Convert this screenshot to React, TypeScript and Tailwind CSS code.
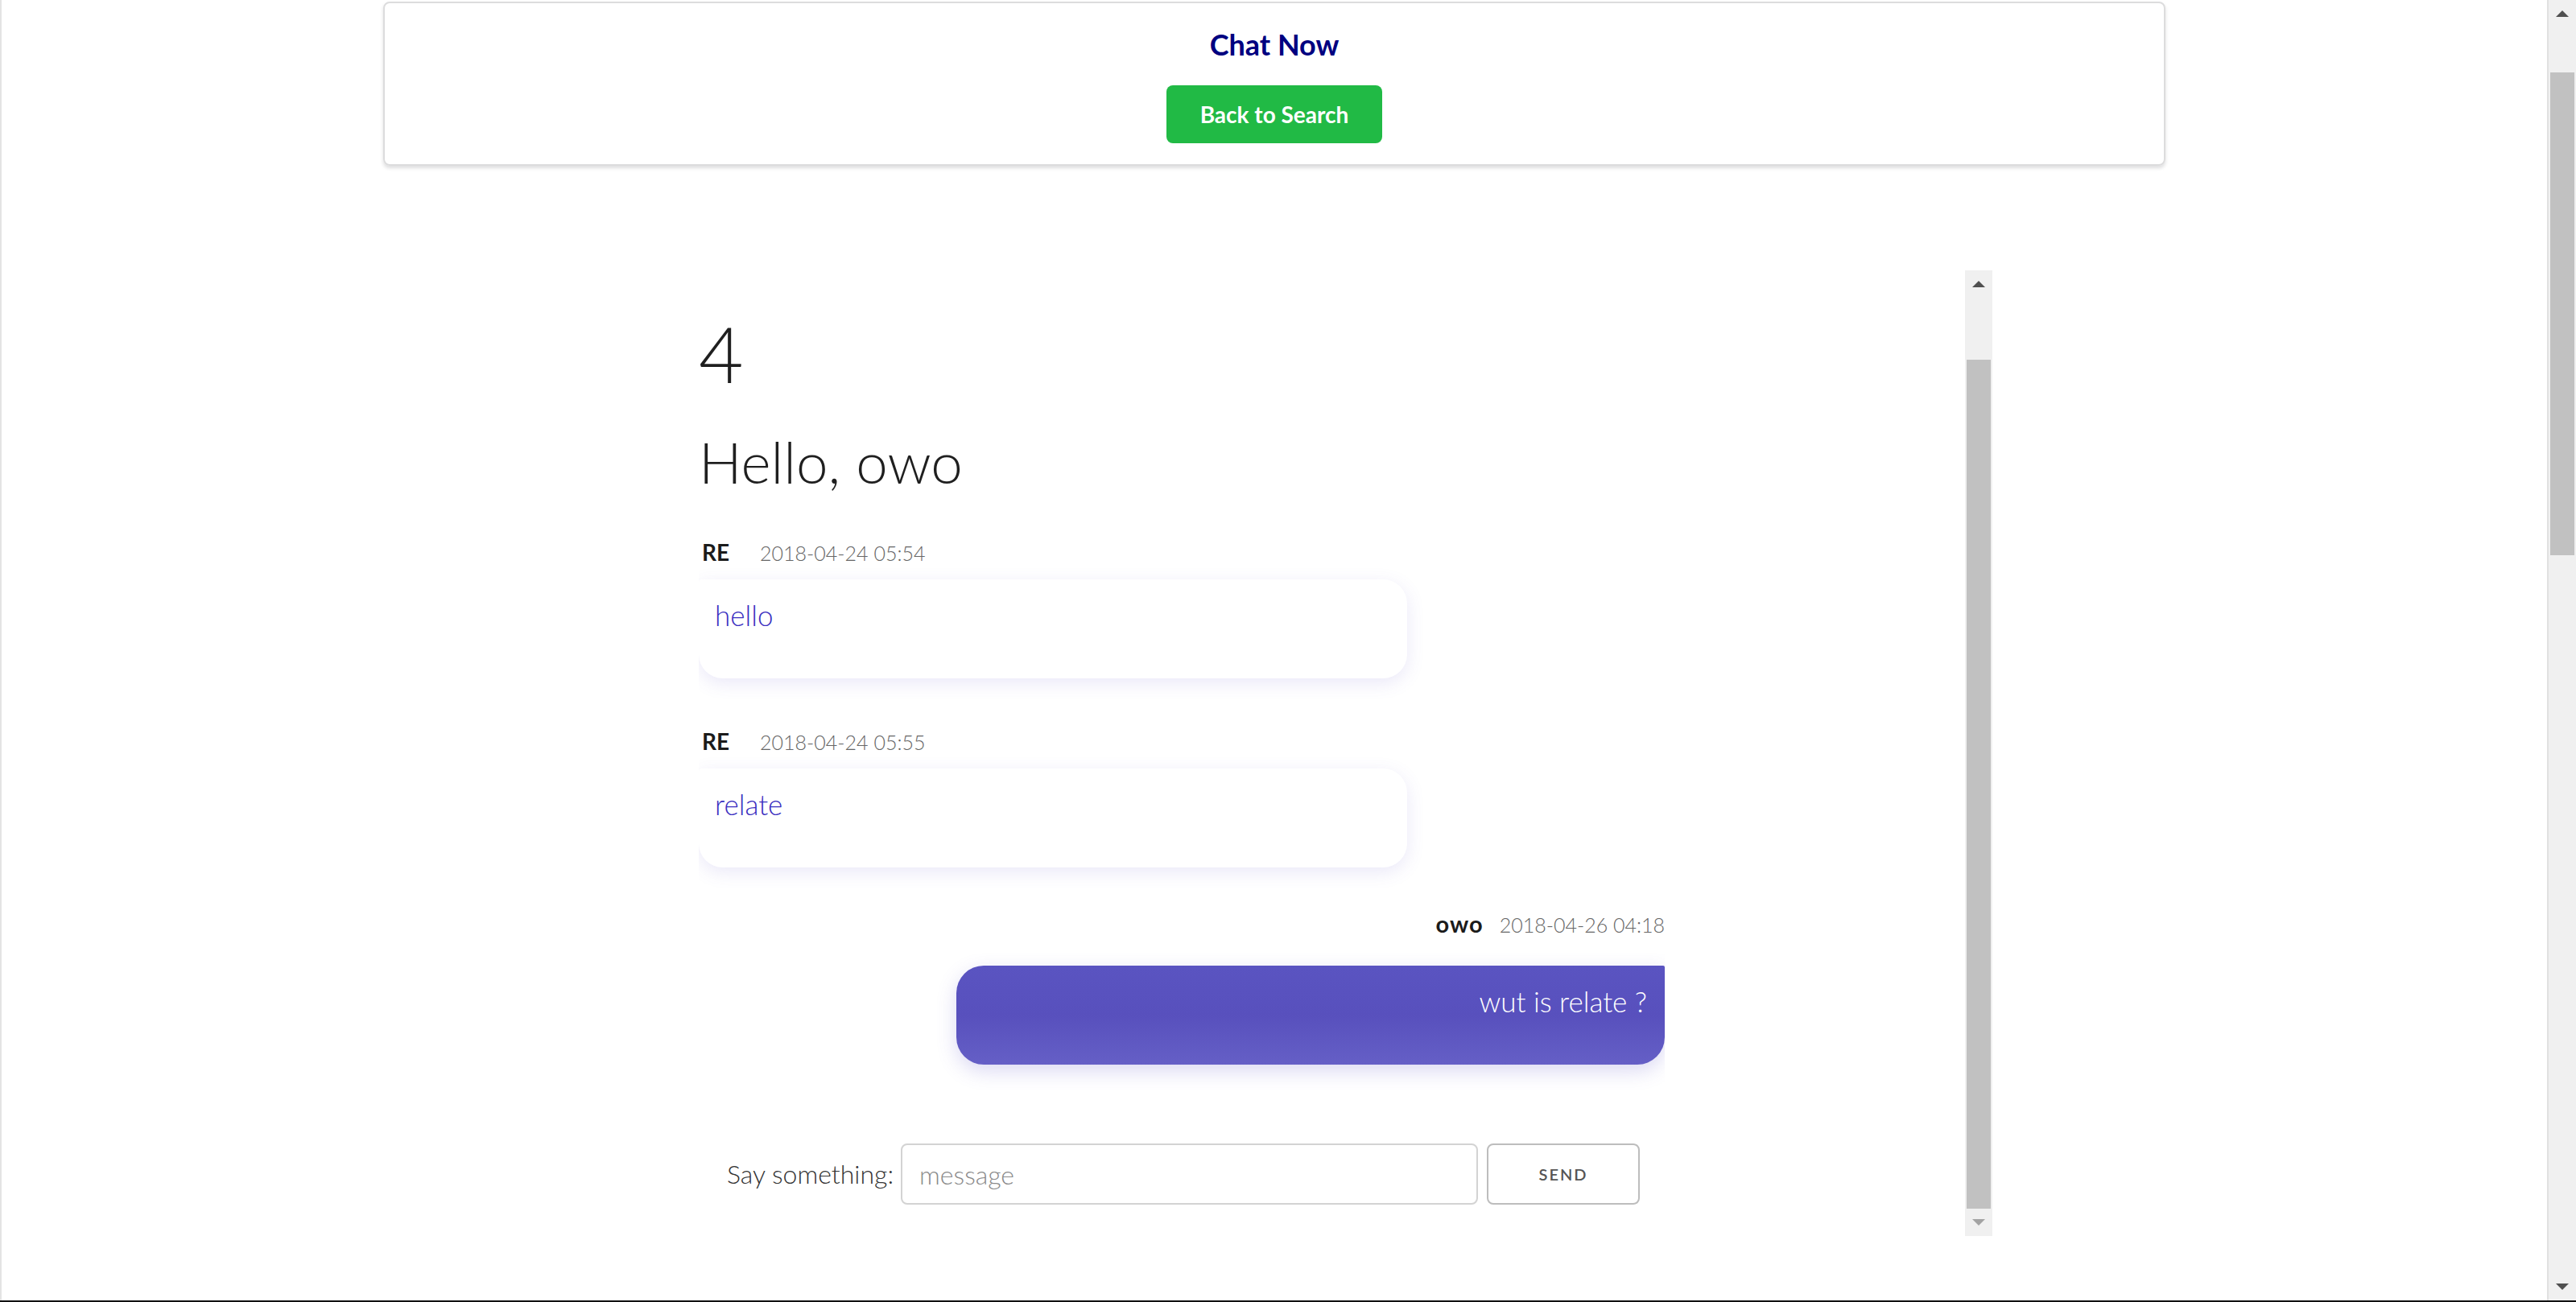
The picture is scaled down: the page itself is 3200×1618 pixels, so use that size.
import React from 'react';

type Msg = { from: string; time: string; text: string; mine?: boolean };

const messages: Msg[] = [
  { from: 'RE', time: '2018-04-24 05:54', text: 'hello' },
  { from: 'RE', time: '2018-04-24 05:55', text: 'relate' },
  { from: 'owo', time: '2018-04-26 04:18', text: 'wut is relate ?', mine: true },
];

const Scrollbar: React.FC<{ thumbTop: number; thumbBottom: number; downDim?: boolean; upDim?: boolean }> = ({ thumbTop, thumbBottom, downDim, upDim }) => (
  <div className="w-[34px] h-full flex flex-col bg-[#f0f0f0] shrink-0">
    <div className="h-[34px] flex items-center justify-center shrink-0">
      <div className={`w-0 h-0 border-l-[8px] border-r-[8px] border-b-[8px] border-l-transparent border-r-transparent ${upDim ? 'border-b-[#a3a3a3]' : 'border-b-[#505050]'}`} />
    </div>
    <div className="flex-1 flex flex-col px-[2px]">
      <div style={{ height: thumbTop }} className="shrink-0" />
      <div style={{ height: thumbBottom - thumbTop }} className="bg-[#c1c1c1] shrink-0" />
    </div>
    <div className="h-[34px] flex items-center justify-center shrink-0">
      <div className={`w-0 h-0 border-l-[8px] border-r-[8px] border-t-[8px] border-l-transparent border-r-transparent ${downDim ? 'border-t-[#a3a3a3]' : 'border-t-[#505050]'}`} />
    </div>
  </div>
);

const Bubble: React.FC<{ msg: Msg; first?: boolean }> = ({ msg, first }) => {
  if (msg.mine) {
    return (
      <div className="flex flex-col items-end mt-[55px]">
        <div className="flex items-baseline gap-[20px] leading-none">
          <span className="text-[29px] font-bold tracking-[1px] text-[#1b1b1b]">{msg.from}</span>
          <span className="text-[25px] font-light text-[#666]">{msg.time}</span>
        </div>
        <div className="mt-[38px] w-[880px] h-[123px] rounded-[34px] rounded-tr-[2px] bg-linear-to-b from-[#5a54c1] via-[#5850bd] to-[#655fc6] shadow-[0_8px_24px_rgba(90,80,200,0.22)] pt-[23px] pr-[22px] text-right">
          <span className="text-[35px] font-light text-white leading-[1.2]">{msg.text}</span>
        </div>
      </div>
    );
  }
  return (
    <div className={`flex flex-col items-start ${first ? 'mt-[63px]' : 'mt-[64px]'}`}>
      <div className="flex items-baseline gap-[38px] leading-none pl-[4px]">
        <span className="text-[28px] font-bold text-[#1b1b1b]">{msg.from}</span>
        <span className="text-[25px] font-light text-[#666]">{msg.time}</span>
      </div>
      <div className="mt-[20px] w-[880px] h-[123px] rounded-[30px] rounded-tl-[4px] bg-white shadow-[0_6px_22px_rgba(90,80,200,0.13)] pt-[23px] pl-[20px]">
        <span className="text-[35px] font-light text-[#3a2ec0] leading-[1.2]">{msg.text}</span>
      </div>
    </div>
  );
};

export default function App() {
  const [text, setText] = React.useState('');

  return (
    <div className="h-screen w-full flex flex-col overflow-hidden bg-white font-[Lato,sans-serif]">
      <div className="flex-1 min-h-0 flex">
        <main className="flex-1 border-l-2 border-[#e3e3e3]">
          <div className="w-[2214px] mx-auto pt-[2px]">
            <div className="border-2 border-[#dcdcdd] rounded-[8px] shadow-[0_3px_4px_rgba(34,36,38,0.15)] pt-[28px] pb-[26px] flex flex-col items-center">
              <h3 className="text-[36px] leading-[46px] font-bold text-[#000080]">Chat Now</h3>
              <button className="mt-[28px] px-[42px] py-[22px] text-[28px] leading-none font-bold text-white bg-[#21ba45] rounded-[8px]">
                Back to Search
              </button>
            </div>

            <div className="mt-[130px] ml-[392px] w-[1607px] h-[1200px] flex">
              <div className="w-[1200px] overflow-hidden pt-[55px]">
                <div className="text-[96px] leading-none font-light text-[#1f1f1f]">4</div>
                <div className="mt-[51px] text-[71px] leading-none font-light text-[#1f1f1f]">Hello, owo</div>
                {messages.map((m, i) => (
                  <Bubble key={i} msg={m} first={i === 0} />
                ))}
                <div className="mt-[98px] flex justify-center items-center pl-[4px]">
                  <label className="text-[32px] font-light text-[#333] mr-[9px]">Say something:</label>
                  <input
                    value={text}
                    onChange={(e) => setText(e.target.value)}
                    placeholder="message"
                    className="w-[717px] h-[76px] border-2 border-[#d3d3d3] rounded-[8px] pl-[21px] text-[32px] font-light text-[#333] placeholder-[#8a8a8a] outline-none"
                  />
                  <button className="ml-[11px] w-[190px] h-[76px] border-2 border-[#bdbdbd] rounded-[8px] text-[20px] font-semibold tracking-[2px] text-[#555] bg-white">
                    SEND
                  </button>
                </div>
              </div>
              <div className="flex-1" />
              <Scrollbar thumbTop={77} thumbBottom={1132} downDim />
            </div>
          </div>
        </main>
        <div className="flex border-l-2 border-[#e0e0e0]">
          <Scrollbar thumbTop={56} thumbBottom={656} />
        </div>
      </div>
      <div className="h-[2px] bg-[#111] shrink-0" />
    </div>
  );
}
